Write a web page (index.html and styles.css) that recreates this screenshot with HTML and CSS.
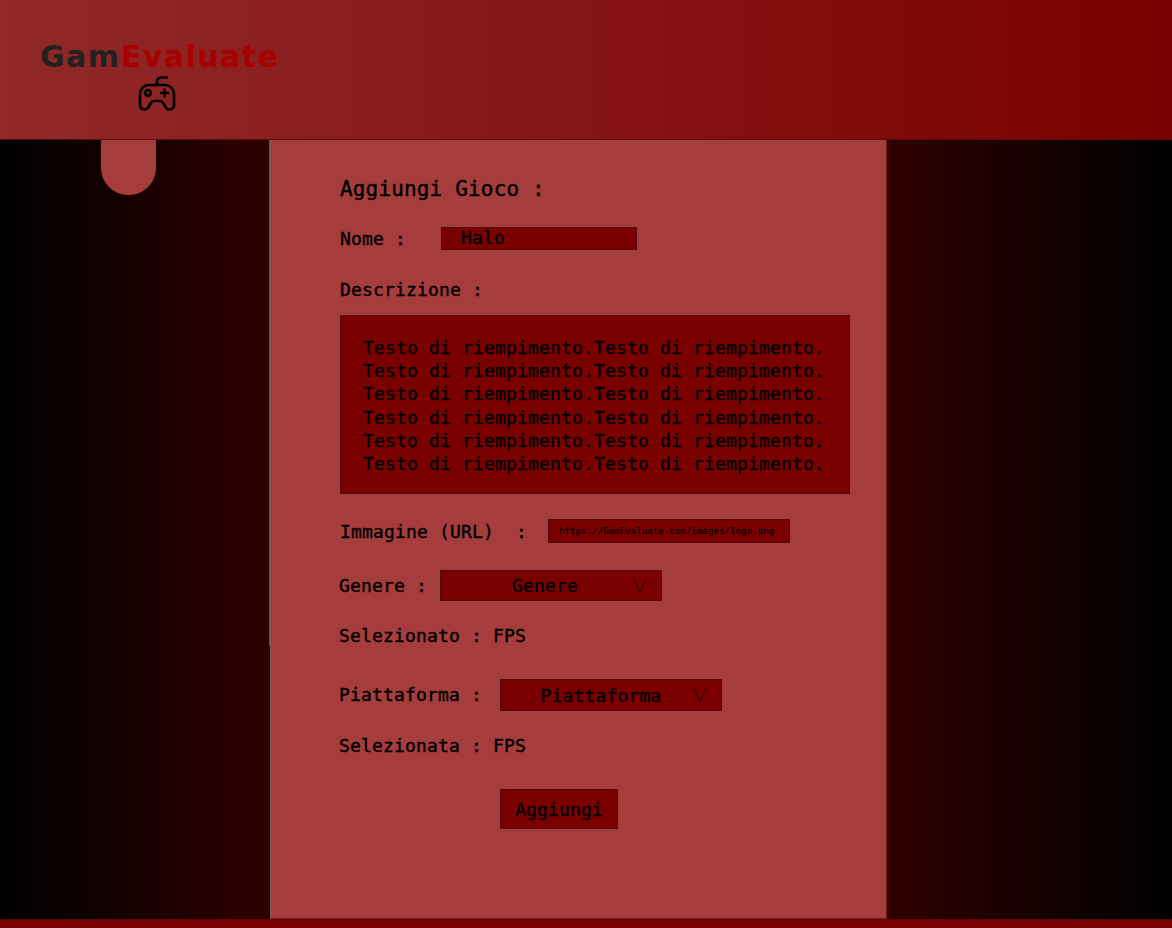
FILE: index.html
```html
<!DOCTYPE html>
<html lang="it">
<head>
    <meta charset="UTF-8">
    <meta name="viewport" content="width=device-width, initial-scale=1.0">
    <title>GamEvaluate - Aggiungi Gioco</title>
    <link rel="stylesheet" href="styles.css">
</head>
<body>
    <header class="top-bar">
        <div class="logo">
            <div class="logo-text">Gam<span class="logo-red">Evaluate</span></div>
            <svg class="logo-icon" viewBox="0 0 38 37" fill="none" stroke="#000" stroke-width="2.7" stroke-linecap="round" stroke-linejoin="round">
                <path d="M11 10h16a9 9 0 0 1 9 9v11a4.500 4.500 0 0 1-8.200 2.500l-3-5a3 3 0 0 0-2.600-1.500h-6.400a3 3 0 0 0-2.600 1.500l-3 5a4.500 4.500 0 0 1-8.200-2.500v-11a9 9 0 0 1 9-9z"/>
                <circle cx="10" cy="18" r="2.800"/>
                <path d="M26.500 14.500v7M23 18h7"/>
                <path d="M19 10v-3.500a4 4 0 0 1 4-4h6"/>
            </svg>
        </div>
    </header>
    <div class="page">
        <aside class="side side-left">
            <div class="menu-tab"></div>
        </aside>
        <main class="content">
            <form class="game-form">
                <h1 class="form-title">Aggiungi Gioco :</h1>
                <div class="row row-nome">
                    <label class="nome-label">Nome :</label>
                    <input class="field field-nome" type="text" value="Halo">
                </div>
                <label class="desc-label">Descrizione :</label>
                <textarea class="field field-desc" spellcheck="false">Testo di riempimento.Testo di riempimento. Testo di riempimento.Testo di riempimento. Testo di riempimento.Testo di riempimento. Testo di riempimento.Testo di riempimento. Testo di riempimento.Testo di riempimento. Testo di riempimento.Testo di riempimento.</textarea>
                <div class="row row-url">
                    <label class="url-label">Immagine (URL)&nbsp; :</label>
                    <input class="field field-url" type="text" value="https://GamEvaluate.com/images/logo.png">
                </div>
                <div class="row row-genere">
                    <label class="genere-label">Genere :</label>
                    <div class="field select select-genere">Genere
                        <svg class="chevron" viewBox="0 0 14 16" fill="none" stroke="#380000" stroke-width="1.2"><path d="M1 1l6 14 6-14"/></svg>
                    </div>
                </div>
                <p class="selected selected-genere">Selezionato : FPS</p>
                <div class="row row-piattaforma">
                    <label class="piattaforma-label">Piattaforma :</label>
                    <div class="field select select-piattaforma">Piattaforma
                        <svg class="chevron" viewBox="0 0 14 16" fill="none" stroke="#380000" stroke-width="1.2"><path d="M1 1l6 14 6-14"/></svg>
                    </div>
                </div>
                <p class="selected selected-piattaforma">Selezionata : FPS</p>
                <button class="field add-btn" type="button">Aggiungi</button>
            </form>
        </main>
        <aside class="side side-right"></aside>
    </div>
    <footer class="bottom-bar"></footer>
</body>
</html>
```

FILE: styles.css
```css
* {
    box-sizing: border-box;
}
body {
    margin: 0;
    height: 928px;
    display: flex;
    flex-direction: column;
    overflow: hidden;
    background: #000;
    color: #000;
    font-family: "DejaVu Sans Mono", "Liberation Mono", monospace;
    font-size: 18px;
    letter-spacing: 0.16px;
    -webkit-text-stroke: 0.4px #000;
}
.top-bar {
    height: 140px;
    flex: none;
    padding: 40px 0 0 40px;
    background: linear-gradient(to right, #912929, #7a0000);
    border-bottom: 1px solid #5a0c0c;
}
.logo {
    width: 240px;
    display: flex;
    flex-direction: column;
}
.logo-text {
    font-family: "DejaVu Sans", sans-serif;
    font-weight: bold;
    font-size: 30px;
    line-height: 34px;
    letter-spacing: 1.5px;
    color: #222;
    white-space: nowrap;
    -webkit-text-stroke: 0;
}
.logo-red {
    color: #a80000;
}
.logo-icon {
    width: 38px;
    height: 37px;
    margin: 1px 0 0 98px;
}
.page {
    flex: 1;
    display: flex;
}
.side {
    flex: none;
}
.side-left {
    position: relative;
    width: 271px;
    background: linear-gradient(to right, #000, #300000);
    border-right: 1px solid #7a5a5a;
}
.side-left::after {
    content: "";
    position: absolute;
    top: 0;
    right: 0;
    width: 1px;
    height: 506px;
    background: #6e5050;
}
.menu-tab {
    width: 55px;
    height: 55px;
    margin-left: 101px;
    border-radius: 0 0 27px 27px;
    background: #a53d3d;
}
.side-right {
    flex: 1;
    background: linear-gradient(to left, #000, #300000);
}
.content {
    width: 616px;
    flex: none;
    background: #a53d3d;
    padding: 36px 0 0 69px;
    border-right: 1px solid #6e1c1c;
    border-bottom: 1px solid #6e1c1c;
}
.game-form {
    display: flex;
    flex-direction: column;
    align-items: flex-start;
}
.form-title {
    margin: 0;
    font-size: 21px;
    font-weight: normal;
    line-height: 26px;
}
.field {
    background: #7a0000;
    border: 1px solid #500a0a;
    color: #000;
    font-family: inherit;
    font-size: 18px;
    letter-spacing: inherit;
    -webkit-text-stroke: inherit;
    border-radius: 0;
    outline: none;
}
.row {
    display: flex;
    align-items: center;
}
.row-nome {
    margin-top: 25px;
}
.nome-label {
    width: 101px;
}
.field-nome {
    width: 196px;
    height: 23px;
    padding: 0 0 3px 19px;
}
.desc-label {
    margin-top: 29px;
    line-height: 22px;
}
.field-desc {
    display: block;
    width: 510px;
    height: 179px;
    margin-top: 14px;
    padding: 20px 0 0 22px;
    line-height: 23.200px;
    resize: none;
    overflow: hidden;
}
.row-url {
    margin-top: 25px;
}
.url-label {
    width: 208px;
}
.field-url {
    width: 242px;
    height: 24px;
    padding: 0 0 0 10px;
    font-size: 9px;
    letter-spacing: 0.1px;
    -webkit-text-stroke: 0.2px #000;
}
.row-genere {
    margin-top: 27px;
    margin-left: -1px;
}
.genere-label {
    width: 101px;
}
.select {
    position: relative;
    width: 222px;
    display: flex;
    align-items: center;
    justify-content: center;
}
.select-genere {
    height: 31px;
    padding-right: 12px;
}
.select-piattaforma {
    height: 32px;
    padding-right: 20px;
}
.chevron {
    position: absolute;
    right: 14px;
    top: 7px;
    width: 14px;
    height: 16px;
}
.selected {
    margin: 24px 0 0 -1px;
    line-height: 22px;
}
.row-piattaforma {
    margin-top: 32px;
    margin-left: -1px;
}
.piattaforma-label {
    width: 161px;
    padding-bottom: 2px;
}
.add-btn {
    width: 118px;
    height: 40px;
    margin: 32px 0 0 160px;
    padding: 0;
}
.bottom-bar {
    height: 9px;
    flex: none;
    background: #7a0000;
    border-top: 1px solid #5a0808;
}
```
